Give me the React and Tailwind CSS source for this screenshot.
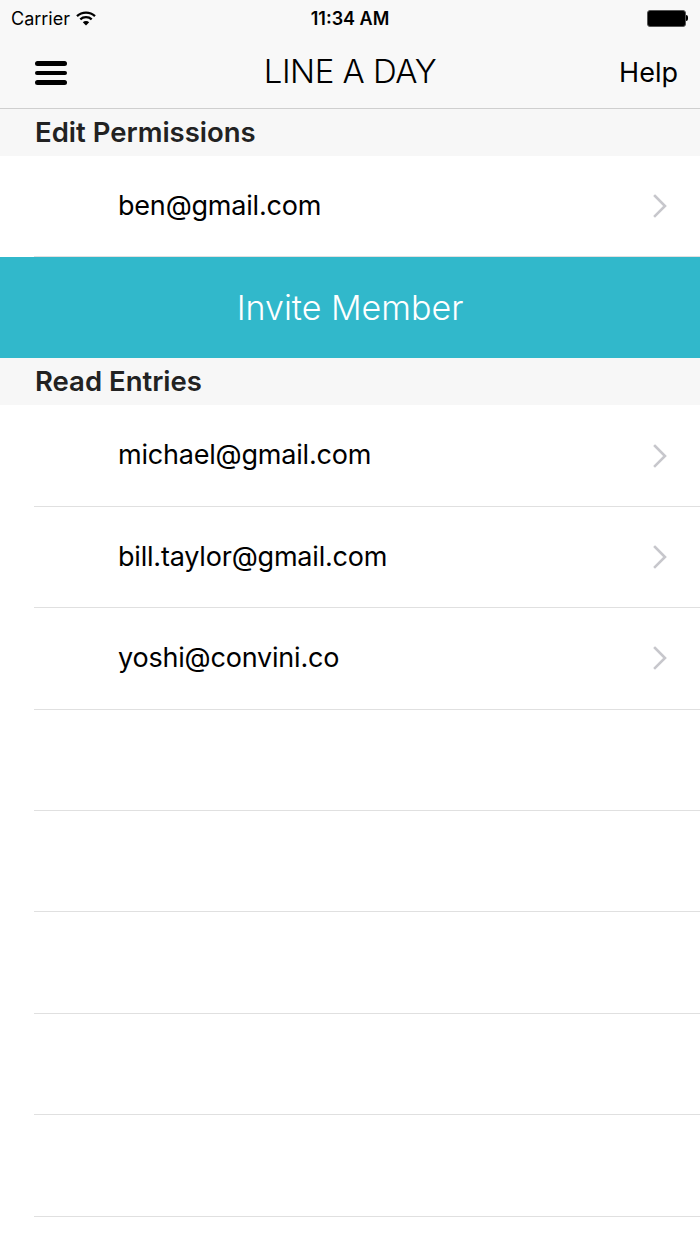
import React from "react";

const font = { fontFamily: "Inter, 'Liberation Sans', sans-serif" };

function Chevron() {
  return (
    <svg width="16" height="24" viewBox="0 0 16 24" className="shrink-0">
      <path d="M3 2 L13 12 L3 22" fill="none" stroke="#c7c7cc" strokeWidth="2.6" strokeLinecap="square" />
    </svg>
  );
}

function Row({ email, chevron }) {
  return (
    <div className="ml-[34px] h-[101.4px] border-b border-[#e0e0e0] flex items-center pr-[32px]">
      <div className="flex-1 pl-[84px] text-[27px] text-black tracking-[-0.2px]">{email}</div>
      {chevron && <Chevron />}
    </div>
  );
}

function SectionHeader({ title }) {
  return (
    <div className="h-[47px] bg-[#f7f7f7] flex items-center pl-[35px] text-[27.5px] font-semibold text-[#222]">
      {title}
    </div>
  );
}

export default function App() {
  return (
    <div className="w-[700px] h-[1244px] bg-white overflow-hidden" style={font}>
      <div className="bg-[#f8f8f8] border-b border-[#cfcfcf] h-[109px] flex flex-col">
        <div className="h-[36px] flex items-center justify-between px-[11px] relative">
          <div className="flex items-center gap-[6px] text-[18px] text-black">
            <span>Carrier</span>
            <svg width="20" height="15" viewBox="0 0 20 15">
              <path d="M1 5.2 A13 13 0 0 1 19 5.2" fill="none" stroke="black" strokeWidth="2.3" />
              <path d="M4.3 8.4 A8.5 8.5 0 0 1 15.7 8.4" fill="none" stroke="black" strokeWidth="2.3" />
              <path d="M10 14.5 L6.8 11.3 A4.6 4.6 0 0 1 13.2 11.3 Z" fill="black" />
            </svg>
          </div>
          <div className="absolute left-0 right-0 text-center text-[18px] font-semibold text-black pointer-events-none">11:34 AM</div>
          <div className="flex items-center pr-[1px]">
            <div className="w-[39px] h-[17px] rounded-[3px] border border-[#555] bg-black" />
            <div className="w-[2px] h-[6px] bg-black rounded-r-sm" />
          </div>
        </div>
        <div className="flex-1 flex items-center justify-between pl-[35px] pr-[22px] relative">
          <div className="flex flex-col gap-[5px] pt-[2px]">
            <div className="w-[32px] h-[4.5px] bg-black rounded-full" />
            <div className="w-[32px] h-[4.5px] bg-black rounded-full" />
            <div className="w-[32px] h-[4.5px] bg-black rounded-full" />
          </div>
          <div className="absolute left-0 right-0 text-center text-[33px] font-light text-black tracking-[-0.5px] pointer-events-none">
            LINE A DAY
          </div>
          <div className="text-[27px] text-black pt-[2px]">Help</div>
        </div>
      </div>
      <SectionHeader title="Edit Permissions" />
      <Row email="ben@gmail.com" chevron />
      <div className="h-[101px] bg-[#31b8cb] flex items-center justify-center text-white text-[34px] font-light">
        Invite Member
      </div>
      <SectionHeader title="Read Entries" />
      <Row email="michael@gmail.com" chevron />
      <Row email="bill.taylor@gmail.com" chevron />
      <Row email="yoshi@convini.co" chevron />
      <Row email="" />
      <Row email="" />
      <Row email="" />
      <Row email="" />
      <Row email="" />
    </div>
  );
}
